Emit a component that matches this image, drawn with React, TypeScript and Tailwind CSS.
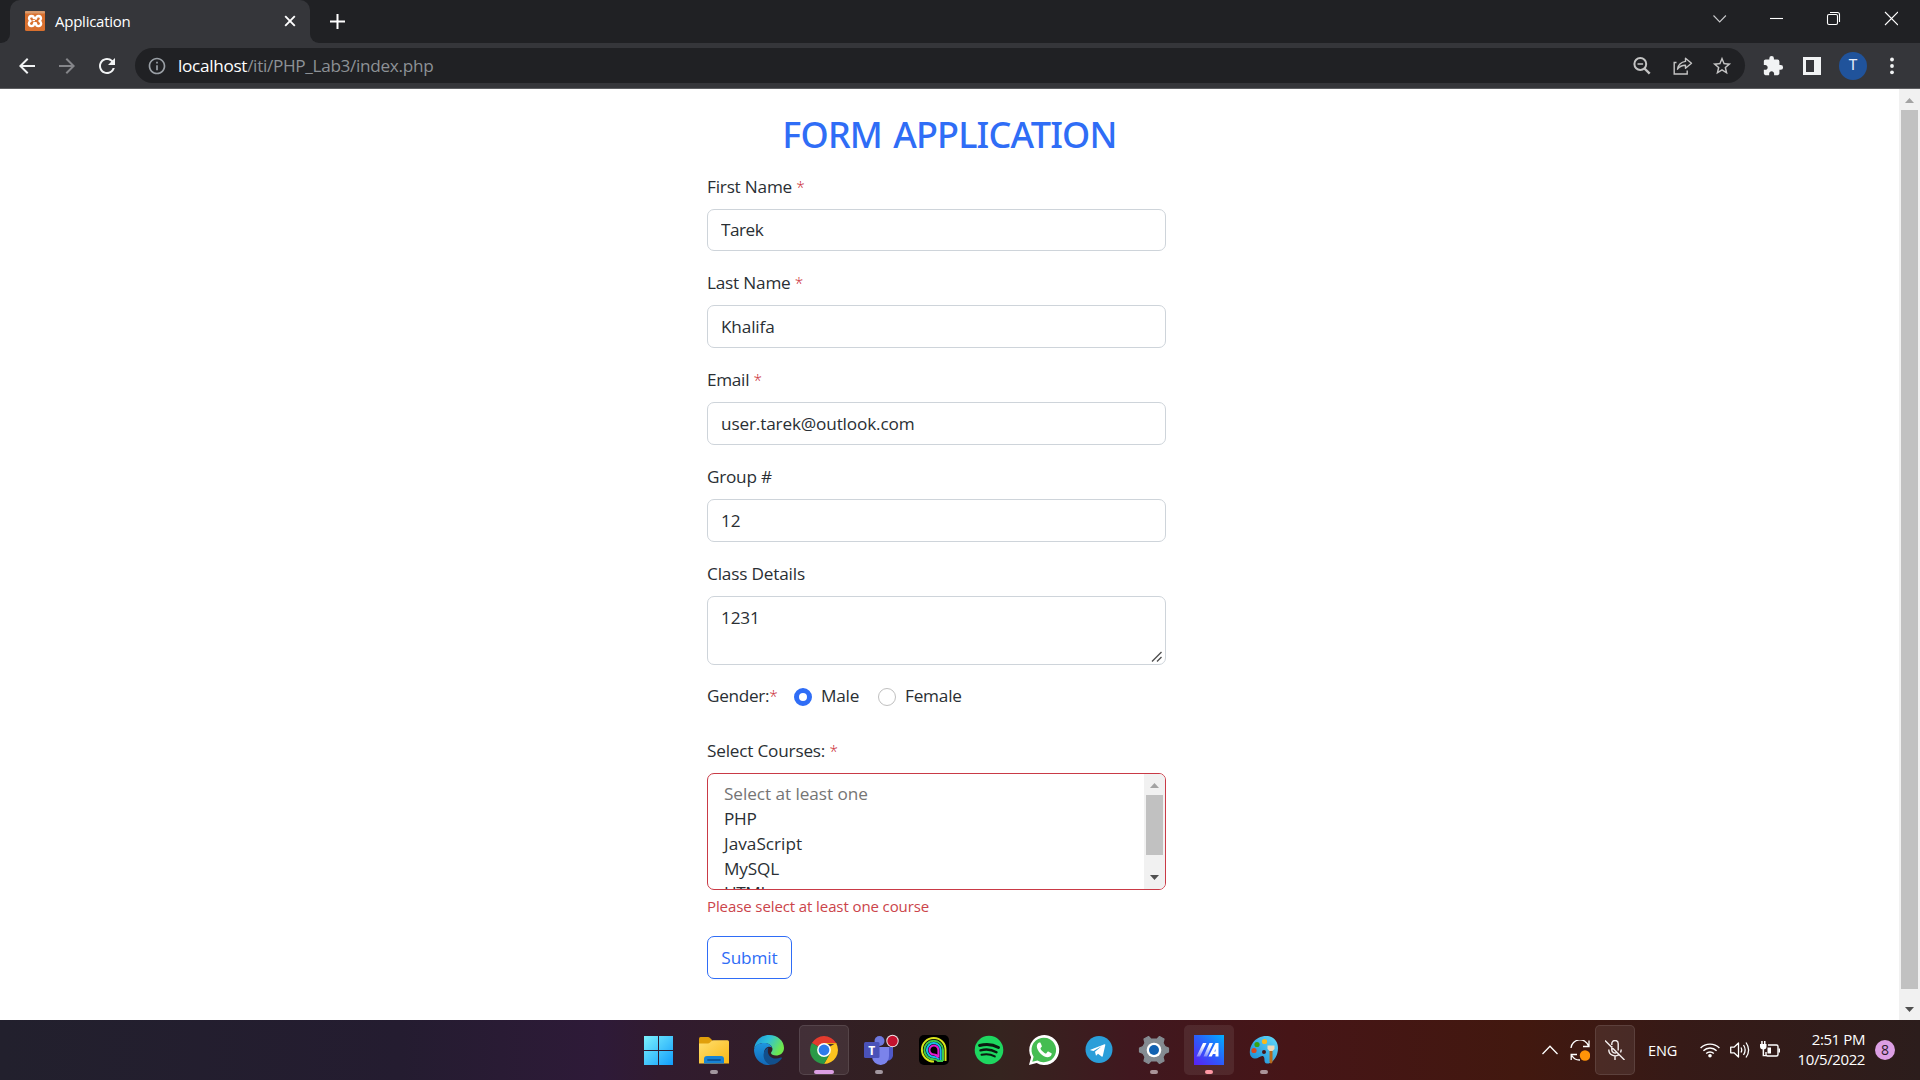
import React from "react";
import { MdArrowBack, MdArrowForward, MdRefresh, MdInfoOutline, MdStarBorder, MdExtension } from "react-icons/md";

type FieldProps = {
  label: string;
  required?: boolean;
  value: string;
  className: string;
  textSpacing?: string;
  labelSpacing?: string;
};

const Star = () => <span className="text-[15.5px] font-light leading-none text-[#c9252f]">*</span>;

function Field({ label, required, value, className, textSpacing = "", labelSpacing = "" }: FieldProps) {
  return (
    <div className={`flex flex-col ${className}`}>
      <label className={`h-[35px] leading-[25px] whitespace-pre ${labelSpacing}`}>
        {label}
        {required && <> <Star /></>}
      </label>
      <input
        readOnly
        defaultValue={value}
        className={`min-h-0 w-full flex-1 rounded-[7px] border border-[#ced4da] bg-white px-[13px] outline-none ${textSpacing}`}
      />
    </div>
  );
}

function BrowserChrome() {
  return (
    <header className="h-[89px] border-b border-[#5d5e61] bg-[#35363a] text-white">
      <div className="flex h-[43px] bg-[#202124]">
        <div className="flex w-[10px] items-end bg-[#35363a]">
          <div className="h-full w-full rounded-br-[9px] bg-[#202124]" />
        </div>
        <div className="flex w-[300px] items-center rounded-t-[10px] bg-[#35363a] pb-[1px] pl-[15px] pr-[14px]">
          <svg width="20" height="20" viewBox="0 0 20 20">
            <rect width="20" height="20" rx="1.5" fill="#d9702e" />
            <rect width="20" height="2.5" rx="1" fill="#d99a6c" />
            <path d="M6.500 5Q8.800 5 8.800 7.200h2.400Q11.200 5 13.500 5q2.500.2 2.500 2.600 0 1.400-1.600 2.400 1.800 1 1.800 2.700-.3 2.300-2.700 2.500-2.600-.2-2.600-3H9.100q0 2.800-2.600 3Q4.100 15 3.800 12.700 3.800 11 5.600 10 4 9 4 7.600 4 5.200 6.500 5z" fill="none" stroke="#fff" strokeWidth="2.300" strokeLinejoin="round" />
            <path d="M7.500 9.600h2.500M11 7.500v1.500" stroke="#fff" strokeWidth="1.300" />
          </svg>
          <span className="ml-[10px] text-[15px] leading-[20px] tracking-[-0.25px]">Application</span>
          <svg className="ml-auto" width="12" height="12" viewBox="0 0 12 12" stroke="#fff" strokeWidth="1.900">
            <path d="M1.2 1.2l9.600 9.600M10.800 1.200L1.200 10.800" />
          </svg>
        </div>
        <div className="w-[10px] bg-[#35363a]">
          <div className="h-full w-full rounded-bl-[9px] bg-[#202124]" />
        </div>
        <svg className="ml-[10px] mt-[14px]" width="15" height="15" viewBox="0 0 15 15" stroke="#fff" strokeWidth="2">
          <path d="M7.500 0v15M0 7.500h15" />
        </svg>
        <svg className="ml-auto mr-[22px] mt-[11px]" width="185" height="16" viewBox="0 0 185 16" fill="none" stroke="#fff" strokeWidth="1.100">
          <path d="M0.500 4.500l6.200 6.500 6.200-6.500" stroke="#c9cacc" />
          <path d="M57 7.500h13" />
          <rect x="114.500" y="3.500" width="10" height="10" rx="1.500" />
          <path d="M117 1.500h7.500a2 2 0 0 1 2 2v7.500" />
          <path d="M172 1l13 13M185 1l-13 13" />
        </svg>
      </div>
      <div className="flex h-[45px] items-center">
        <div className="flex w-[135px] items-center gap-[16px] pl-[15.400px]">
          <MdArrowBack size={24} className="text-[#f1f3f4]" />
          <MdArrowForward size={24} className="text-[#85868a]" />
          <MdRefresh size={24} className="text-[#f1f3f4]" />
        </div>
        <div className="flex h-[35px] w-[1610px] items-center rounded-full bg-[#202124] pl-[12px] pr-[12px]">
          <MdInfoOutline size={20} className="text-[#9aa0a6]" />
          <span className="ml-[11px] text-[17.200px] leading-[24px] tracking-[-0.32px] text-[#8d9196]">
            <span className="text-white">localhost</span>/iti/PHP_Lab3/index.php
          </span>
          <svg className="ml-auto mr-[3px]" width="18" height="18" viewBox="0 0 18 18" fill="none" stroke="#c4c4c4">
            <circle cx="7.300" cy="7" r="5.900" strokeWidth="2" />
            <path d="M11.500 11.500l5.200 5.200" strokeWidth="2.400" />
            <path d="M4.500 7h5.600" strokeWidth="1.500" />
          </svg>
          <svg className="ml-[19px]" width="20" height="18" viewBox="0 0 20 18" fill="none" stroke="#c4c4c4" strokeWidth="1.400">
            <path d="M3.500 5.500H1.200v11.500h13v-3.500" />
            <path d="M12.500 1.200L18.500 6.200l-6 5v-3c-3.500 0-6 1-8 4 .3-4 3.500-7.300 8-7.800z" strokeLinejoin="round" />
          </svg>
          <MdStarBorder size={22} className="ml-[18px] text-[#c4c4c4]" />
        </div>
        <MdExtension size={22} className="ml-[17px] text-[#f1f3f4]" />
        <svg className="ml-[19px]" width="18" height="18" viewBox="0 0 18 18">
          <path d="M0 0h18v18H0zM3 3v12h8V3z" fill="#f1f3f4" fillRule="evenodd" />
        </svg>
        <div className="ml-[18px] flex h-[28px] w-[28px] items-center justify-center rounded-full bg-[#20539b] font-[Roboto] text-[15px] text-[#e8eefb]">T</div>
        <svg className="ml-[23px]" width="4" height="18" viewBox="0 0 4 18" fill="#f1f3f4">
          <circle cx="2" cy="2.500" r="1.900" /><circle cx="2" cy="9" r="1.900" /><circle cx="2" cy="15.300" r="1.900" />
        </svg>
      </div>
    </header>
  );
}

function Courses() {
  return (
    <div className="flex h-[117px] overflow-hidden rounded-[7px] border border-[#c93a46]">
      <ul className="mt-[7px] flex-1 pl-[16px] leading-[25px]">
        <li className="tracking-[-0.060px] text-[#757575]">Select at least one</li>
        <li className="tracking-[-0.300px]">PHP</li>
        <li className="tracking-[0.020px]">JavaScript</li>
        <li className="tracking-[-0.150px]">MySQL</li>
        <li className="-mt-[1px] tracking-[-0.400px]">HTML</li>
      </ul>
      <div className="flex w-[21px] flex-col items-center bg-[#f1f1f1]">
        <svg className="mt-[9px]" width="9" height="5" viewBox="0 0 9 5"><path d="M0 5h9L4.500 0z" fill="#a3a3a3" /></svg>
        <div className="mt-[7px] h-[60px] w-[17px] bg-[#c1c1c1]" />
        <svg className="mt-[20px]" width="9" height="5" viewBox="0 0 9 5"><path d="M0 0h9L4.500 5z" fill="#505050" /></svg>
      </div>
    </div>
  );
}

function Page() {
  return (
    <div className="flex h-[931px] bg-white">
      <main className="flex flex-1 flex-col pt-[20px] text-[17.200px] text-[#2a2f34]">
        <h1 className="h-[65px] text-center font-['Noto_Sans'] text-[36px] font-medium leading-[52px] tracking-[-0.820px] text-[#2f6df6] [word-spacing:2.500px]">FORM APPLICATION</h1>
        <form className="ml-[707px] w-[459px]">
          <Field className="h-[77px]" label="First Name" required value="Tarek" labelSpacing="tracking-[-0.2px]" textSpacing="tracking-[-0.5px]" />
          <Field className="mt-[19px] h-[78px]" label="Last Name" required value="Khalifa" labelSpacing="tracking-[-0.2px]" textSpacing="tracking-[-0.150px]" />
          <Field className="mt-[19px] h-[78px]" label="Email" required value="user.tarek@outlook.com" labelSpacing="tracking-[-0.3px]" textSpacing="tracking-[-0.150px]" />
          <Field className="mt-[19px] h-[78px]" label="Group #" value="12" labelSpacing="tracking-[-0.25px]" textSpacing="tracking-[-0.2px]" />
          <div className="mt-[19px] flex h-[104px] flex-col">
            <label className="h-[35px] leading-[25px] tracking-[-0.180px]">Class Details</label>
            <div className="relative flex flex-1 rounded-[7px] border border-[#ced4da] px-[13px] pt-[7px] leading-[28px] tracking-[-0.2px]">
              1231
              <svg className="absolute bottom-[2px] right-[3px]" width="11" height="11" viewBox="0 0 11 11" stroke="#505050" strokeWidth="1.400">
                <path d="M1 10.500L10.500 1M6 10.500L10.500 6" />
              </svg>
            </div>
          </div>
          <div className="mt-[19px] flex h-[26px] items-center leading-[24px] tracking-[-0.2px]">
            <span className="w-[87px] pb-[2px] tracking-[-0.3px]">Gender:<Star /></span>
            <span className="h-[18px] w-[18px] rounded-full border-[5px] border-[#2f6df6] bg-white" />
            <span className="ml-[9px] w-[57px] pb-[2px]">Male</span>
            <span className="h-[18px] w-[18px] rounded-full border border-[#bfbfbf]" />
            <span className="ml-[9px] pb-[2px]">Female</span>
          </div>
          <div className="mt-[28px] h-[35px] leading-[25px] tracking-[-0.2px]">Select Courses: <Star /></div>
          <Courses />
          <div className="mt-[4px] h-[24px] text-[15px] leading-[24px] tracking-[-0.100px] text-[#cb444a]">Please select at least one course</div>
          <button type="button" className="mt-[18px] flex h-[43px] w-[85px] items-center justify-center rounded-[7px] border border-[#2f6df6] tracking-[-0.1px] text-[#2f6df6]">Submit</button>
        </form>
      </main>
      <div className="flex w-[21px] flex-col items-center bg-[#f1f1f1]">
        <svg className="mt-[9px]" width="9" height="5" viewBox="0 0 9 5"><path d="M0 5h9L4.500 0z" fill="#a3a3a3" /></svg>
        <div className="mt-[7px] h-[879px] w-[17px] bg-[#c1c1c1]" />
        <svg className="mt-[18px]" width="9" height="5" viewBox="0 0 9 5"><path d="M0 0h9L4.500 5z" fill="#505050" /></svg>
      </div>
    </div>
  );
}

type TileProps = { children: React.ReactNode; frame?: string; bar?: string };

function Tile({ children, frame = "border-transparent", bar = "" }: TileProps) {
  return (
    <div className={`flex h-[50px] w-[50px] flex-col items-center rounded-[5px] border pt-[9px] ${frame}`}>
      {children}
      {bar && <div className={`mt-[5px] h-[4px] shrink-0 rounded-full ${bar}`} />}
    </div>
  );
}

const ic = { width: 30, height: 30, viewBox: "0 0 30 30", className: "shrink-0 overflow-visible" };

function Taskbar() {
  return (
    <footer className="flex h-[60px] items-center bg-[linear-gradient(90deg,#22202d_0px,#241c30_400px,#2e1a38_600px,#311b2f_660px,#33211f_930px,#35241f_1000px,#40181f_1130px,#461517_1290px,#42180f_1520px,#361a17_1680px,#2c1d1c_1920px)] pl-[634px] text-white">
      <div className="flex gap-[5px]">
        <Tile>
          <svg {...ic}>
            <defs><linearGradient id="win" x1="0" y1="0" x2="30" y2="30" gradientUnits="userSpaceOnUse"><stop stopColor="#7df3fd" /><stop offset="1" stopColor="#0f9bfb" /></linearGradient></defs>
            <path d="M0 1h14v14H0zM15 1h14v14H15zM0 16h14v14H0zM15 16h14v14H15z" fill="url(#win)" />
          </svg>
        </Tile>
        <Tile bar="w-[8px] bg-[#a2979f]">
          <svg {...ic}>
            <defs><linearGradient id="fold" x1="0" y1="0" x2="1" y2="1"><stop stopColor="#ffdf70" /><stop offset="1" stopColor="#f9b814" /></linearGradient></defs>
            <path d="M0 3.500Q0 2 1.500 2H9q1 0 2 1l2.500 2.500L11 9H0z" fill="#e09f0b" />
            <path d="M0 8.500h9q1 0 2-1L12.500 6q.7-.8 2-.8H28.500Q30 5.200 30 6.700V28.500H0z" fill="url(#fold)" />
            <path d="M5 28.500V24q0-3 3-3h14q3 0 3 3v4.500z" fill="#1883d4" /><path d="M9 25h12" stroke="#0c589c" strokeWidth="1.800" strokeLinecap="round" />
          </svg>
        </Tile>
        <Tile>
          <svg {...ic}>
            <defs>
              <linearGradient id="eg" x1="0" y1="0" x2="1" y2=".4"><stop stopColor="#1791dc" /><stop offset=".5" stopColor="#30c1d8" /><stop offset="1" stopColor="#6ee84d" /></linearGradient>
              <linearGradient id="eb" x1="0" y1="0" x2="0" y2="1"><stop stopColor="#1e96df" /><stop offset="1" stopColor="#1268b7" /></linearGradient>
            </defs>
            <path d="M0 14.500C1 5.500 7 0 15 0c9 0 15 6 15 13 0 5-4 7.500-8 7.500-3 0-5-1-5-2.500 0-1 1.500-1.500 1.500-4C18.500 11 15 8 10 8 5 8 1.500 10.500 0 14.500z" fill="url(#eg)" />
            <path d="M0 14.500C1.500 10 5.500 8 10 8c4 0 7 2 8 4.500-4-2-8 1-8 6C10 24 13 28 17 29.800 7 31 0 24 0 14.500z" fill="url(#eb)" />
            <path d="M14.500 12.500c-3 1-5 4-5 7.500 0 5 3.500 9.200 7.500 9.800 5 0 8.500-3 10.700-6.200.6-.9 0-1.500-1-1C19 26 11.500 20.500 14.500 12.500z" fill="#124f8c" />
          </svg>
        </Tile>
        <Tile frame="border-white/10 bg-white/8" bar="w-[20px] bg-[#dc9fe4]">
          <svg {...ic}>
            <path d="M15 15L2.900 8A14 14 0 0 1 27.100 8H15z" fill="#e33b2e" />
            <path d="M15 15L27.100 8A14 14 0 0 1 15 29l6-10.500z" fill="#fcc31e" />
            <path d="M15 15l6 3.500L15 29A14 14 0 0 1 2.900 8z" fill="#2a9a48" />
            <path d="M15 8h12.100A14 14 0 0 1 27.600 9H15z" fill="#e9ab12" />
            <circle cx="15" cy="15" r="6.900" fill="#fff" /><circle cx="15" cy="15" r="5.400" fill="#2d7bea" />
          </svg>
        </Tile>
        <Tile bar="w-[8px] bg-[#a2979f]">
          <svg {...ic}>
            <circle cx="15.500" cy="6" r="5" fill="#6d78de" />
            <path d="M21 12h8v8.500a5.500 5.500 0 0 1-8 4.500z" fill="#5059c9" />
            <path d="M7 12h18v9a8.500 8.500 0 0 1-17 1z" fill="#7b83eb" />
            <rect y="7" width="15.500" height="16" rx="1.500" fill="#4a52b8" />
            <text x="7.700" y="19.500" fontFamily="Open Sans" fontSize="12" fontWeight="700" fill="#fff" textAnchor="middle">T</text>
            <circle cx="28.500" cy="6" r="6.200" fill="#f1e6ea" /><circle cx="28.500" cy="6" r="5.200" fill="#c4122f" />
          </svg>
        </Tile>
        <Tile>
          <svg {...ic} fill="none">
            <rect width="30" height="30" rx="5" fill="#000" />
            <g strokeWidth="2">
              <path d="M26.500 26V15A11.800 11.800 0 1 0 15 26.500" stroke="#d8e51c" />
              <path d="M24 26V15a9.300 9.300 0 1 0-9 9.300q2 0 4 1.700h5" stroke="#3dc94a" />
              <path d="M21.700 25V15a6.900 6.900 0 1 0-6.700 6.900q3 0 5 2.600" stroke="#17b9e8" />
              <path d="M19.400 22.500V15a4.500 4.500 0 1 0-4.400 4.500q2.500 0 4.400 3" stroke="#e51bd3" />
            </g>
          </svg>
        </Tile>
        <Tile>
          <svg {...ic} fill="none">
            <circle cx="15" cy="15" r="14.300" fill="#1ed760" />
            <path d="M5.500 10.500q10.500-2.800 19 2" stroke="#0b1a10" strokeWidth="2.900" strokeLinecap="round" />
            <path d="M6.500 15.300q8.500-2.400 16 1.900" stroke="#0b1a10" strokeWidth="2.400" strokeLinecap="round" />
            <path d="M7.500 19.800q7-1.900 13.300 1.600" stroke="#0b1a10" strokeWidth="2" strokeLinecap="round" />
          </svg>
        </Tile>
        <Tile>
          <svg {...ic}>
            <path d="M0 30l2.100-7.700A15 15 0 1 1 7.700 28z" fill="#fff" />
            <path d="M3.300 26.700l1.300-4.900A12.300 12.300 0 1 1 8.500 25.500z" fill="#45bd52" />
            <path d="M10.500 7.500c-.8-.1-2.700 1.200-2.700 3.800 0 4.500 6 11 11 11 2.600 0 4-2 3.900-3.700-.1-.5-3.200-2-3.700-2.100-.7 0-1.400 1.900-2 2-1.500-.1-5.300-3.500-5.500-5.100.1-.6 1.500-1.400 1.400-2.100-.2-.6-1.200-3.300-1.600-3.700z" fill="#fff" />
          </svg>
        </Tile>
        <Tile>
          <svg {...ic}>
            <circle cx="15" cy="14.500" r="13.500" fill="#2a9ed9" />
            <path d="M6.500 14.800L20.500 9.300q1-.2.800.8l-2.500 11q-.3.900-1.200.3L14 18.700l-2 2-1-4 6.500-5.500-8 4.800-3-.8q-.7-.2 0-.4z" fill="#fff" />
          </svg>
        </Tile>
        <Tile bar="w-[8px] bg-[#ab9499]">
          <svg {...ic}>
            <path d="M9.500 1.500L11.800 4h6.400L20.500 1.500 25 4l-1 4 2 3.500 3.500 1.500v4L26 18.500 24 22l1 4-4.500 2.500L18.200 26h-6.400L9.500 28.500 5 26l1-4-2-3.500L.5 17v-4L4 11.500 6 8 5 4z" fill="#848b91" stroke="#848b91" strokeWidth="1.200" strokeLinejoin="round" />
            <circle cx="15" cy="15" r="7.300" fill="#fff" /><circle cx="15" cy="15" r="5" fill="#1161b1" />
          </svg>
        </Tile>
        <Tile frame="border-transparent bg-white/8" bar="w-[8px] bg-[#ff98a4]">
          <svg {...ic}>
            <defs>
              <linearGradient id="ma" x1="0" y1="1" x2="1" y2="0"><stop stopColor="#5a20f4" /><stop offset=".5" stopColor="#2c5cfb" /><stop offset="1" stopColor="#00b0ff" /></linearGradient>
              <linearGradient id="fade" x1="0" y1="1" x2="0" y2="0"><stop stopColor="#fff" stopOpacity=".35" /><stop offset=".8" stopColor="#fff" /></linearGradient>
            </defs>
            <path d="M0 0h30v30H0z" fill="url(#ma)" />
            <path d="M2.500 21.500L9 8h3.500L6 21.500zM9.500 21.500L15.500 8H19l-6 13.500z" fill="url(#fade)" />
            <path d="M14.500 21.500L21.500 8H24.500v13.500h-3v-2.500h-2.500l-1.300 2.500zm5.800-5h1.200v-2.500z" fill="#fff" />
          </svg>
        </Tile>
        <Tile bar="w-[8px] bg-[#ab9499]">
          <svg {...ic}>
            <defs><linearGradient id="pal" x1="1" y1="0" x2="0" y2="1"><stop stopColor="#64dbfa" /><stop offset="1" stopColor="#1587d2" /></linearGradient></defs>
            <path d="M17 1c8 0 12 6 12 12 0 9-6 16-11 15.500-4-.5-1.500-5-3.500-7-2.500-2-5 2.500-9 2C-1 22.500 0 13 4 7.500 7 3.500 12 1 17 1zM13 17a2 2 0 1 0 4 0 2 2 0 0 0-4 0z" fill="url(#pal)" fillRule="evenodd" />
            <circle cx="15.500" cy="6.500" r="2.600" fill="#f6b91c" /><circle cx="8" cy="9.500" r="2.600" fill="#37a40f" /><circle cx="5" cy="15.500" r="2.600" fill="#d8491f" />
            <path d="M18.500 10.500h7v3.500l-2 2h-3l-2-2z" fill="#efd9b8" /><path d="M20.500 16h3v11q-1.500 3-3 0z" fill="#b86a1d" />
          </svg>
        </Tile>
      </div>

      <div className="ml-auto flex h-full items-center">
        <svg width="16" height="10" viewBox="0 0 16 10" fill="none" stroke="#fff" strokeWidth="1.300"><path d="M.5 9L8 1.200 15.500 9" /></svg>
        <svg className="ml-[12px]" width="20" height="21" viewBox="0 0 20 21" fill="none" stroke="#fff" strokeWidth="1.300">
          <path d="M1 8A9 9 0 0 1 18.500 6M19 .5V6.500H13M1.200 20V14.500H7M1.800 15.500A9 9 0 0 0 10 20" />
          <circle cx="15" cy="15.500" r="5.200" fill="#ff9408" stroke="none" />
        </svg>
        <div className="ml-[5px] flex h-[50px] w-[40px] items-center justify-center rounded-[5px] border border-white/10 bg-white/8">
          <svg width="20" height="20" viewBox="0 0 20 20" fill="none" stroke="#f5f0f0" strokeWidth="1.400">
            <path d="M6.800 5V3.700a3.200 3.200 0 0 1 6.400 0v6.800M6.800 6v4a3.200 3.200 0 0 0 5 2.500M3.800 9.500a6.200 6.200 0 0 0 10 5M16.200 9.500q0 1.500-.7 3M10 16v4M0 .5L19.500 20" />
          </svg>
        </div>
        <span className="ml-[13px] w-[52px] pt-[1px] text-[14.500px] leading-[20px] tracking-[-0.100px]">ENG</span>
        <svg width="20" height="16" viewBox="0 0 20 16" fill="none" stroke="#fff" strokeWidth="1.400">
          <path d="M.6 6a13.300 13.300 0 0 1 18.800 0M3.400 8.800a9.300 9.300 0 0 1 13.200 0M6.200 11.500a5.400 5.400 0 0 1 7.600 0" /><circle cx="10" cy="13.700" r="1.800" fill="#fff" stroke="none" />
        </svg>
        <svg className="ml-[10px]" width="20" height="18" viewBox="0 0 20 18" fill="none" stroke="#fff" strokeWidth="1.300">
          <path d="M.7 6.200H4L8.500 2v14L4 11.800H.7z" strokeLinejoin="round" /><path d="M11 6.500q1.500 2.500 0 5M13.500 4q3.300 5 0 10M16 1.500q5.200 7.500 0 15" />
        </svg>
        <svg className="ml-[10px]" width="20" height="18" viewBox="0 0 20 18" fill="none" stroke="#fff" strokeWidth="1.400">
          <path d="M8 4h8.500q1.500 0 1.500 1.500v8q0 1.500-1.500 1.500h-9Q6 15 6 13.500V11" /><path d="M7.500 6.500H11v6H7.500zM18.500 7.500h1.500v4h-1.500z" fill="#fff" stroke="none" />
          <path d="M0 3h6.500v2.500q0 3-3.200 3T0 5.500zM1.200 0h1.500v3H1.200zM4 0h1.500v3H4zM2.600 8h1.500v6H6v1.300H2.600z" fill="#fff" stroke="none" />
        </svg>
        <div className="w-[85px] pb-[2px] text-right text-[15px] leading-[20px] tracking-[-0.400px]">
          <div>2:51 PM</div>
          <div>10/5/2022</div>
        </div>
        <div className="ml-[10px] mr-[25px] flex h-[20px] w-[20px] items-center justify-center rounded-full bg-[#dc9fe4] text-[14px] leading-none text-[#2a1c2c]">8</div>
      </div>
    </footer>
  );
}

export default function App() {
  return (
    <div className="h-[1080px] w-[1920px] overflow-hidden font-['Open_Sans','Noto_Sans',sans-serif]">
      <BrowserChrome />
      <Page />
      <Taskbar />
    </div>
  );
}
